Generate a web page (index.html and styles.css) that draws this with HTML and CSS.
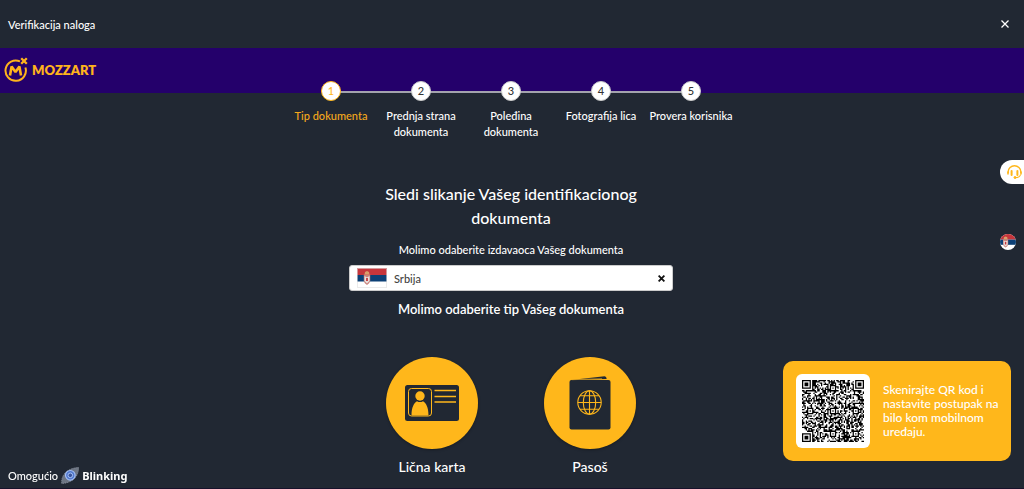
FILE: index.html
```html
<!DOCTYPE html>
<html lang="sr">
  <head>
    <meta charset="utf-8">
    <title>Verifikacija naloga</title>
    <link rel="stylesheet" href="styles.css">
  </head>
  <body>
    <header class="topbar">
      <span>Verifikacija naloga</span>
      <button class="close" type="button" aria-label="Zatvori">
        <svg width="8" height="8" viewBox="0 0 8 8"><path d="M0.5 0.5L7.5 7.5M7.5 0.5L0.5 7.5" stroke="#fff" stroke-width="1.3"/></svg>
      </button>
    </header>

    <div class="brand">
      <svg width="24" height="26" viewBox="0 0 24 26" fill="none" stroke="#ffb31c">
        <path d="M16 4.4A10.2 10.2 0 1 0 21.4 10.5" stroke-width="2"/>
        <path d="M6 18.5L7.6 9.5L11.5 15L15.4 9.5L17 18.5" stroke-width="2.6" stroke-linejoin="bevel"/>
        <path d="M17.2 1.2L22.8 6.8M22.8 1.2L17.2 6.8" stroke-width="2.3"/>
      </svg>
      <span class="brand-name">MOZZART</span>
    </div>

    <main>
      <ol class="steps">
        <li class="active"><span class="num">1</span>Tip dokumenta</li>
        <li><span class="num">2</span>Prednja strana dokumenta</li>
        <li><span class="num">3</span>Poleđina dokumenta</li>
        <li><span class="num">4</span>Fotografija lica</li>
        <li><span class="num">5</span>Provera korisnika</li>
      </ol>

      <form class="doc-form">
        <h1>Sledi slikanje Vašeg identifikacionog dokumenta</h1>
        <label for="country">Molimo odaberite izdavaoca Vašeg dokumenta</label>
        <div class="country">
          <svg class="flag" width="30" height="20" viewBox="0 0 30 20">
            <use href="#serbia"/>
            <rect x="0.5" y="0.5" width="29" height="19" fill="none" stroke="#ddd" stroke-opacity="0.6"/>
          </svg>
          <select id="country">
            <option>Srbija</option>
          </select>
          <button class="clear" type="button" aria-label="Obriši">
            <svg width="7" height="7" viewBox="0 0 7 7"><path d="M0.6 0.6L6.4 6.4M6.4 0.6L0.6 6.4" stroke="#111" stroke-width="1.8"/></svg>
          </button>
        </div>
        <h2>Molimo odaberite tip Vašeg dokumenta</h2>
        <div class="types">
          <button class="type" type="button">
            <span class="disc">
              <svg width="54" height="36" viewBox="0 0 54 36">
                <rect width="54" height="36" rx="2.5" fill="#212833"/>
                <rect x="3.5" y="3.5" width="23" height="27.5" rx="3" fill="none" stroke="#ffb71b"/>
                <circle cx="15" cy="11" r="4.7" fill="#ffb71b"/>
                <path d="M6.5 30.5C6.5 22 9 18 12 16.2Q15 18 18 16.2C21 18 23.5 22 23.5 30.5Z" fill="#ffb71b"/>
                <path d="M29.5 5.5H51M29.5 11.5H51M29.5 17H51" stroke="#ffb71b" stroke-width="1.3"/>
              </svg>
            </span>
            Lična karta
          </button>
          <button class="type" type="button">
            <span class="disc">
              <svg width="42" height="54" viewBox="0 0 42 54">
                <path d="M2 4L35.5 0.3Q37.5 0.2 37.7 3L2 4Z" fill="#212833"/>
                <rect x="0.5" y="4" width="41" height="49.5" rx="2" fill="#212833"/>
                <path d="M3 3.7L33 2.7" stroke="#ffb71b" stroke-width="0.6"/>
                <g fill="none" stroke="#ffb71b" stroke-width="1.1">
                  <circle cx="20.5" cy="26.5" r="11.7"/>
                  <ellipse cx="20.5" cy="26.5" rx="6.2" ry="11.7"/>
                  <path d="M20.5 14.8V38.2M8.8 26.5H32.2M11 19.8H30M11 33.2H30"/>
                </g>
              </svg>
            </span>
            Pasoš
          </button>
        </div>
      </form>
    </main>

    <aside class="qr-card">
      <svg id="qr" class="qr" viewBox="0 0 49 49" role="img" aria-label="QR kod"><path/></svg>
      <p>Skenirajte QR kod i nastavite postupak na bilo kom mobilnom uređaju.</p>
    </aside>

    <button class="support" type="button" aria-label="Podrška">
      <svg width="15" height="14" viewBox="0 0 15 14" fill="none" stroke="#ffb71b">
        <path d="M1.2 8V6.5A6.3 5.8 0 0 1 13.8 6.5V8" stroke-width="1.4"/>
        <path d="M1 6.5V9.5M14 6.5V9.5" stroke-width="1.6"/>
        <path d="M4.6 6V10M10.4 6V10" stroke-width="2" stroke-linecap="round"/>
        <path d="M13.5 9.5Q13 12.7 8 12.7" stroke-width="1.2"/>
        <circle cx="8" cy="12.5" r="1" fill="#ffb71b"/>
      </svg>
    </button>

    <button class="language" type="button" aria-label="Srpski">
      <svg width="16" height="16" viewBox="3 0 20 20"><use href="#serbia"/></svg>
    </button>

    <footer>
      Omogućio
      <svg width="18" height="17" viewBox="0 0 18 17">
        <path d="M17.5 0.5C17.8 8 13 15.8 0.7 16.5C0 8 6 1.2 17.5 0.5Z" fill="#6d7583" stroke="#8b93a1" stroke-dasharray="1 1"/>
        <circle cx="9.3" cy="8.3" r="4.8" fill="#5077cc" stroke="#a3bff5" stroke-width="1.2"/>
        <circle cx="9.3" cy="8.3" r="2.3" fill="#3b559a" stroke="#a8c3f8"/>
      </svg>
      <b>Blinking</b>
    </footer>

    <svg class="defs" width="0" height="0">
      <symbol id="serbia" viewBox="0 0 30 20" width="30" height="20">
        <rect width="30" height="20" fill="#fff"/>
        <rect width="30" height="7" fill="#c6363c"/>
        <rect y="7" width="30" height="6.5" fill="#0c4076"/>
        <path d="M6.8 6.5H13.2V12.5Q13 15.5 10 17Q7 15.5 6.8 12.5Z" fill="#c9837c"/>
        <path d="M7.5 8L10 9.5L12.5 8V13L10 15.5L7.5 13Z" fill="#eadfdc"/>
        <path d="M9.1 10H10.9V13H9.1Z" fill="#c6363c"/>
        <path d="M7.5 6.5L8 4L10 3L12 4L12.5 6.5Z" fill="#d9a06b"/>
      </symbol>
    </svg>

    <script src="qr.js"></script>
  </body>
</html>
```
FILE: styles.css
```css
* {
  box-sizing: border-box;
}

body {
  margin: 0;
  min-height: 100vh;
  background: #212833;
  border-bottom: 1px solid #17122b;
  color: #fff;
  font-family: Lato, "Liberation Sans", sans-serif;
  font-size: 11px;
  font-weight: 500;
}

button {
  padding: 0;
  border: 0;
  background: none;
  color: inherit;
  font: inherit;
  cursor: pointer;
}

svg {
  display: block;
}

.defs {
  position: absolute;
}

.topbar {
  display: flex;
  align-items: center;
  justify-content: space-between;
  height: 48px;
  padding: 0 15px 0 8px;
}

.brand {
  display: flex;
  align-items: center;
  gap: 4px;
  height: 45px;
  padding: 0 4px 2px;
  background: #24006b;
  color: #ffb31c;
}

.brand-name {
  font-size: 13px;
  font-weight: 800;
  line-height: 16px;
}

main {
  padding-right: 2px;
}

.steps {
  position: relative;
  display: flex;
  justify-content: center;
  margin: -12px 0 0;
  padding: 0;
  list-style: none;
  line-height: 16px;
  text-align: center;
}

.steps li {
  position: relative;
  width: 90px;
}

/* line back to the step before */
.steps li + li::before {
  content: "";
  position: absolute;
  top: 10px;
  left: -50%;
  width: 100%;
  height: 2px;
  background: #a3a3ad;
}

.num {
  position: relative;
  z-index: 1;
  display: block;
  width: 20px;
  height: 20px;
  margin: 0 auto 7px;
  border: 1px solid #ccc;
  border-radius: 50%;
  background: #fff;
  color: #333;
  line-height: 18px;
}

.active {
  color: #f5a81c;
}

.active .num {
  border-color: #ffb71b;
  color: #ffb71b;
}

.doc-form {
  max-width: 324px;
  margin: 0 auto;
  padding-top: 42px;
  text-align: center;
}

h1 {
  margin: 0 0 12px;
  font-size: 16px;
  font-weight: 500;
  line-height: 24px;
}

.doc-form label {
  display: block;
  margin-bottom: 7px;
  line-height: 16px;
}

.country {
  display: flex;
  align-items: center;
  height: 26px;
  padding: 0 7px;
  border: 1px solid #ccc;
  border-radius: 3px;
  background: #fff;
}

.country select {
  flex: 1;
  margin-left: 7px;
  padding: 0;
  border: 0;
  background: none;
  color: #444;
  font: inherit;
  appearance: none;
}

h2 {
  margin: 8px 0 38px;
  font-size: 13px;
  font-weight: 600;
  line-height: 20px;
}

.types {
  display: flex;
  justify-content: center;
  gap: 66px;
}

.type {
  width: 92px;
  font-size: 14px;
  line-height: 20px;
}

.disc {
  display: flex;
  align-items: center;
  justify-content: center;
  height: 92px;
  margin-bottom: 8px;
  border-radius: 50%;
  background: #ffb71b;
  box-shadow: 0 1px 3px rgba(0, 0, 0, 0.3);
}

.qr-card {
  position: fixed;
  right: 13px;
  bottom: 28px;
  display: flex;
  align-items: center;
  gap: 13px;
  width: 228px;
  padding: 13px;
  border-radius: 10px;
  background: #ffb71b;
}

.qr {
  flex: none;
  width: 74px;
  height: 74px;
  padding: 6px;
  border-radius: 6px;
  background: #fff;
}

.qr-card p {
  margin: 0 -8px 0 0;
  font-size: 12px;
  line-height: 14px;
}

.support {
  position: fixed;
  top: 160px;
  right: 0;
  display: flex;
  align-items: center;
  width: 24px;
  height: 24px;
  padding-left: 7px;
  border-radius: 12px 0 0 12px;
  background: #fff;
}

.language {
  position: fixed;
  top: 234px;
  right: 8px;
  overflow: hidden;
  border-radius: 50%;
}

footer {
  position: fixed;
  bottom: 5px;
  left: 8px;
  display: flex;
  align-items: center;
  gap: 3px;
}

footer b {
  font-family: "Noto Sans", sans-serif;
}
```
FILE: qr.js
```js
const size = 49
const centers = [6, 24, 42]
const grid = []

let seed = 8
const random = () => {
  seed = (seed * 16807) % 2147483647
  return seed / 2147483647
}

for (let y = 0; y < size; y++) {
  grid.push([])
  for (let x = 0; x < size; x++) {
    grid[y].push(random() < 0.5)
  }
}

// timing lines
for (let i = 0; i < size; i++) {
  grid[6][i] = i % 2 === 0
  grid[i][6] = i % 2 === 0
}

// square rings round (cx, cy), light on the given distances
const rings = (cx, cy, radius, light) => {
  for (let y = cy - radius; y <= cy + radius; y++) {
    for (let x = cx - radius; x <= cx + radius; x++) {
      if (x < 0 || y < 0 || x >= size || y >= size) continue
      const distance = Math.max(Math.abs(x - cx), Math.abs(y - cy))
      grid[y][x] = !light.includes(distance)
    }
  }
}

centers.forEach(cy => centers.forEach(cx => rings(cx, cy, 2, [1])))
rings(3, 3, 4, [2, 4])
rings(45, 3, 4, [2, 4])
rings(3, 45, 4, [2, 4])

let d = ''
grid.forEach((row, y) => row.forEach((dark, x) => {
  if (dark) d += `M${x} ${y}h1v1h-1z`
}))
document.querySelector('#qr path').setAttribute('d', d)
```
